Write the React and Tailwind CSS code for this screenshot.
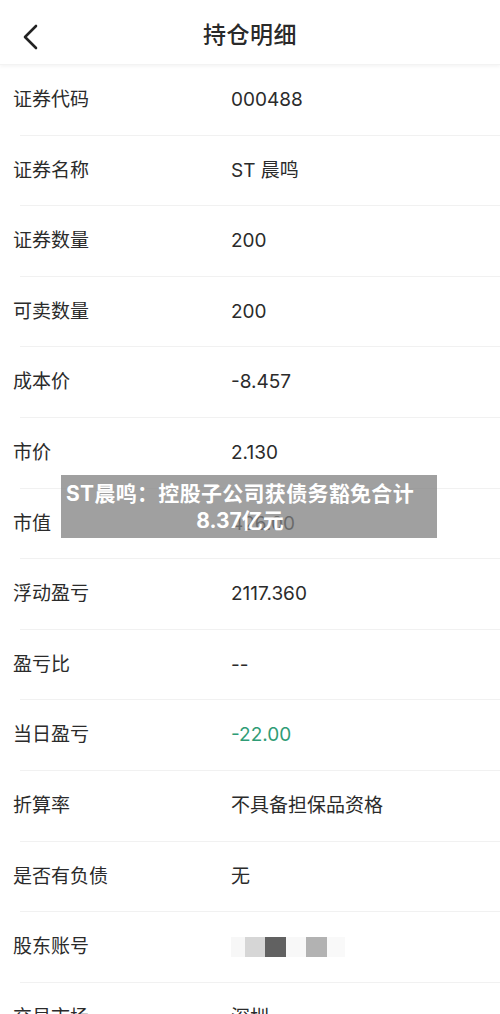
import React from 'react';

const rows = [
  { label: '证券代码', value: '000488' },
  { label: '证券名称', value: 'ST 晨鸣' },
  { label: '证券数量', value: '200' },
  { label: '可卖数量', value: '200' },
  { label: '成本价', value: '-8.457' },
  { label: '市价', value: '2.130' },
  { label: '市值', value: '426.00' },
  { label: '浮动盈亏', value: '2117.360' },
  { label: '盈亏比', value: '--' },
  { label: '当日盈亏', value: '-22.00', green: true },
  { label: '折算率', value: '不具备担保品资格' },
  { label: '是否有负债', value: '无' },
  { label: '股东账号', masked: true },
  { label: '交易市场', value: '深圳' },
];

function Masked() {
  return (
    <div className="flex items-center">
      <div className="w-[14px] h-[20px] bg-[#f7f7f7]" />
      <div className="w-[20px] h-[20px] bg-[#d6d6d6]" />
      <div className="w-[21px] h-[20px] bg-[#616161]" />
      <div className="w-[20px] h-[20px] bg-[#f8f8f8]" />
      <div className="w-[21px] h-[20px] bg-[#b2b2b2]" />
      <div className="w-[18px] h-[20px] bg-[#f9f9f9]" />
    </div>
  );
}

export default function App() {
  return (
    <div
      className="relative w-[500px] h-[1014px] overflow-hidden bg-white text-[#222]"
      style={{ fontFamily: 'Inter, "Noto Sans CJK SC", sans-serif' }}
    >
      {/* header */}
      <div className="relative h-[65px] flex items-center justify-center shadow-[0_2px_3px_rgba(0,0,0,0.04)] border-b border-[#f3f3f3]">
        <svg
          className="absolute left-[20px] top-[23px]"
          width="22"
          height="28"
          viewBox="0 0 22 28"
          fill="none"
          stroke="#222"
          strokeWidth="2.6"
          strokeLinecap="round"
          strokeLinejoin="round"
        >
          <path d="M16 3 L5 14 L16 25" />
        </svg>
        <h1 className="text-[23px] font-medium text-[#2a2a2a] tracking-[0.5px] mt-[6px]">持仓明细</h1>
      </div>

      {/* rows */}
      <div>
        {rows.map((r) => (
          <div key={r.label} className="relative h-[70.6px] flex items-center">
            <div className="w-[231px] pl-[13px] text-[19px] text-[#2b2b2b]">{r.label}</div>
            <div className={`text-[19px] ${r.green ? 'text-[#2f9c76]' : 'text-[#2b2b2b]'}`}>
              {r.masked ? <Masked /> : r.value}
            </div>
            <div className="absolute left-[20px] right-0 bottom-0 h-px bg-[#f1f1f1]" />
          </div>
        ))}
      </div>

      {/* overlay caption */}
      <div className="absolute left-[61px] top-[475px] w-[376px] h-[63px] pr-[18px] bg-[#808080]/75 flex flex-col items-center justify-center text-white font-bold text-[21px] leading-[27px]">
        <div className="tracking-[0.3px]">ST晨鸣：控股子公司获债务豁免合计</div>
        <div>8.37亿元</div>
      </div>
    </div>
  );
}
